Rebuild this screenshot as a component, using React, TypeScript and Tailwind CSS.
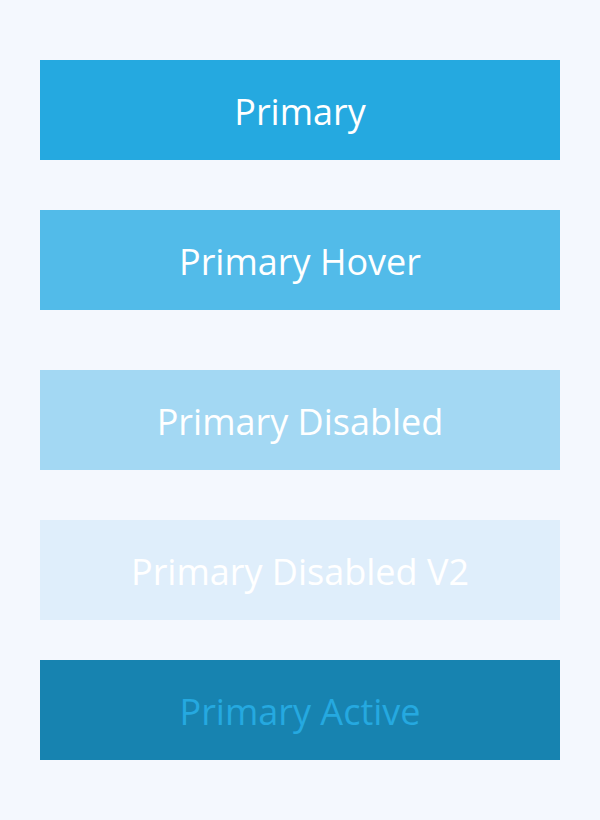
export default function App() {
  const font = { fontFamily: '"Open Sans", sans-serif' };
  return (
    <div className="min-h-[820px] w-[600px] bg-[#f4f8fe] px-10 pt-[60px] pb-[60px] flex flex-col" style={font}>
      <button className="h-[100px] w-full pt-[4px] bg-[#25a9e0] text-white text-[36px] flex items-center justify-center">Primary</button>
      <button className="mt-[50px] h-[100px] w-full pt-[4px] bg-[#52bbe9] text-white text-[36px] flex items-center justify-center">Primary Hover</button>
      <button className="mt-[60px] h-[100px] w-full pt-[4px] bg-[#a3d8f3] text-white text-[36px] flex items-center justify-center">Primary Disabled</button>
      <button className="mt-[50px] h-[100px] w-full pt-[4px] bg-[#dfeefb] text-white text-[36px] flex items-center justify-center">Primary Disabled V2</button>
      <button className="mt-[40px] h-[100px] w-full pt-[4px] bg-[#1783b0] text-[#25a9e0] text-[36px] flex items-center justify-center">Primary Active</button>
    </div>
  );
}
